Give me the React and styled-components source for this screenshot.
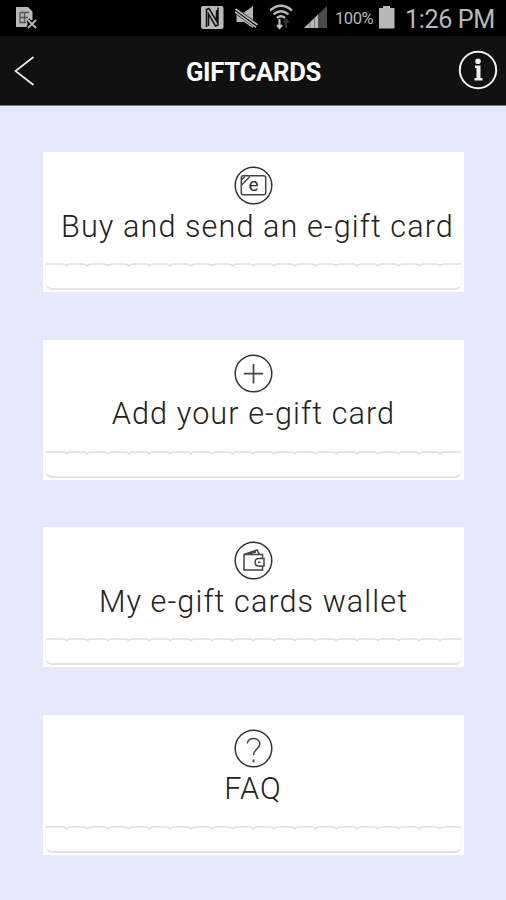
import React from 'react';
import styled, {createGlobalStyle} from 'styled-components';

const GlobalStyle = createGlobalStyle`
  * {
    box-sizing: border-box;
  }

  body {
    margin: 0;
    background-color: #e6e9fe;
    font-family: Roboto, "Liberation Sans", sans-serif;
  }
`

const Screen = styled.div`
  width: 506px;
  height: 900px;
  overflow: hidden;
  display: flex;
  flex-direction: column;
  background-color: #e6e9fe;
`

const StatusBar = styled.div`
  height: 36px;
  flex-shrink: 0;
  padding: 0 12px 0 15px;
  display: flex;
  background-color: #000;
  color: #b8b8b8;

  svg {
    flex-shrink: 0;
    display: block;
  }
`

const StatusIcons = styled.div`
  margin-left: auto;
  display: flex;
`

const Battery = styled.span`
  width: 51px;
  padding-left: 7px;
  font-size: 16.5px;
  line-height: 37px;
  letter-spacing: -0.4px;
  white-space: nowrap;
`

const Clock = styled.span`
  width: 95px;
  padding-left: 6px;
  font-size: 25.2px;
  line-height: 39px;
  letter-spacing: -0.4px;
  white-space: nowrap;
`

const Header = styled.header`
  height: 70px;
  flex-shrink: 0;
  padding: 0 7px 0 13px;
  display: grid;
  grid-template-columns: 41px 1fr 41px;
  align-items: center;
  background-color: #111;
  border-bottom: 1px solid #77777c;
  color: #fff;
`

const Title = styled.h1`
  margin: 0;
  padding: 2px 5px 0 0;
  text-align: center;
  font-size: 25.6px;
  font-weight: 700;
  line-height: 30px;
  letter-spacing: -0.25px;
`

const IconButton = styled.button`
  height: 41px;
  padding: 0;
  border: 0;
  background: none;
  color: inherit;

  svg {
    display: block;
  }
`

const CardList = styled.main`
  padding: 46px 42px 0 43px;
  display: flex;
  flex-direction: column;
  gap: 47.6px;
`

const Card = styled.a`
  height: 140px;
  padding: 14px 2px 2px;
  display: flex;
  flex-direction: column;
  align-items: center;
  background-color: #fff;
  color: #222;
`

const Label = styled.span`
  margin-top: 2.7px;
  height: 36px;
  font-size: 30.6px;
  font-weight: 300;
  line-height: 36px;
  letter-spacing: 1.08px;
  margin-right: ${props => props.$shift}px;
  white-space: nowrap;
`

const Stub = styled.div`
  width: 100%;
  height: 28px;
  margin-top: auto;
  border: 1px solid #f6f6f6;
  border-top: 0;
  border-bottom: 2px solid #e2e2e2;
  border-radius: 0 0 7px 7px;

  svg {
    display: block;
  }
`

const SimIcon = () => (
    <svg width="24" height="36" viewBox="0 0 24 36">
        <path d="M1 7h12l4.500 4.500V20l-5 1v6H1z" fill="#b8b8b8"/>
        <path d="M5 12.500h9M5 12.500v10h6M9.500 12.500v10M5 17.500h8" fill="none" stroke="#555" strokeWidth="1.300"/>
        <path d="M13 20l8 8M21 20l-8 8" stroke="#000" strokeWidth="4"/>
        <path d="M13 20l8 8M21 20l-8 8" stroke="#b8b8b8" strokeWidth="1.800"/>
    </svg>
)

const NfcIcon = () => (
    <svg width="34" height="36" viewBox="0 0 34 36">
        <rect x="0" y="6" width="22.500" height="23" rx="2" fill="#b8b8b8"/>
        <path d="M5.500 27V9.500L8 8.500l7.500 12.500V10M17 7.500v17.500l-2.500 1L7.500 14v12" fill="none" stroke="#111" strokeWidth="1.500"/>
    </svg>
)

const MuteIcon = () => (
    <svg width="35" height="36" viewBox="0 0 35 36">
        <path d="M1.500 12.500h7.500l9-6.500v22l-9-6h-7.500z" fill="#b4b4b4"/>
        <path d="M-0.500 10l22.500 16" stroke="#000" strokeWidth="5.500"/>
        <path d="M0.500 9l22 15.800M0 12l21 15.200" stroke="#b8b8b8" strokeWidth="1.700"/>
    </svg>
)

const WifiIcon = () => (
    <svg width="34" height="36" viewBox="0 0 34 36">
        <g fill="none" stroke="#b8b8b8" strokeWidth="2.400">
            <path d="M0 10.500Q11 1 22 10.500"/>
            <path d="M3.500 14.300Q11 8 18.500 14.300"/>
            <path d="M7 18Q11 14.500 15 18"/>
        </g>
        <path d="M9.500 19v9M7 25l2.500 3 2.500-3" fill="none" stroke="#c4c4c4" strokeWidth="2"/>
        <path d="M16 28v-8M13.500 22.500l2.500-3 2.500 3" fill="none" stroke="#333" strokeWidth="2"/>
    </svg>
)

const SignalIcon = () => (
    <svg width="24" height="36" viewBox="0 0 24 36">
        <path d="M0 28L23 6v22z" fill="#4a4a4a"/>
        <path d="M0 28L14 14.500V28z" fill="#b8b8b8"/>
        <path d="M6 22.300V28M10.500 18V28" stroke="#777"/>
    </svg>
)

const BatteryIcon = () => (
    <svg width="20" height="36" viewBox="0 0 20 36">
        <path d="M4 6h7v2h4.500v20.500H0V8h4z" fill="#b8b8b8"/>
    </svg>
)

const BackIcon = () => (
    <svg width="41" height="41" viewBox="0 0 41 41" fill="none" stroke="#eee" strokeWidth="1.700">
        <path d="M20.500 7L2.500 21l18 14"/>
    </svg>
)

const InfoIcon = () => (
    <svg width="41" height="41" viewBox="0 0 41 41">
        <circle cx="20" cy="20" r="18.200" fill="none" stroke="#f2f2f2" strokeWidth="2"/>
        <circle cx="20" cy="11.200" r="2.800" fill="#eee"/>
        <path d="M17 15.500h5.500v12.500h2v2.500h-8v-2.500h2V18H17z" fill="#eee"/>
    </svg>
)

const GiftLetter = styled.text`
  font-size: 19px;
  font-weight: 400;
  fill: #333;
  stroke: none;
  text-anchor: middle;
`

const glyphs = {
    gift: (
        <>
            <rect x="7.300" y="9.800" width="24.400" height="18.900" rx="2"/>
            <path d="M7.500 19L16 10.500M7.500 14l3.500-3.500"/>
            <GiftLetter x="19.500" y="24.800">e</GiftLetter>
        </>
    ),
    add: <path d="M19.500 10v19.500M9.800 19.700h19.400" strokeWidth="1.700"/>,
    wallet: (
        <>
            <path d="M28.500 17.500v-4H10v15.500h18.500v-4M10 13.500L23 9l2.500 4.300M13.500 12.700l8.500-1.700"/>
            <path d="M30 17.500h-5.500c-4.500 0-4.500 7.500 0 7.500H30zM24 21.200h2.500"/>
        </>
    ),
    faq: (
        <>
            <path d="M13.300 14.500c0.300-7 12.700-6.600 12.500 0.800-0.100 4-6.300 5.200-6.300 10.700"/>
            <path d="M19.500 30.500v2.800" strokeWidth="2"/>
        </>
    )
}

const CardIcon = ({name}) => (
    <svg width="40" height="40" viewBox="0 0 40 40" fill="none" stroke="#444" strokeWidth="1.500">
        <circle cx="19.500" cy="19.500" r="18.300" stroke="#333"/>
        {glyphs[name]}
    </svg>
)

// perforated edge: a small notch every 20.75px
const notches = Array.from({length: 19}, (_, i) => `H${16.5 + i * 20.75}q2.500 0 4 1.700q1.500-1.700 4-1.700`)
const tearLine = `M0 2${notches.join('')}H415`

const TearLine = () => (
    <svg width="415" height="6" viewBox="0 0 415 6">
        <path d={tearLine} fill="none" stroke="#dedede" strokeWidth="1.700"/>
    </svg>
)

const items = [
    {icon: 'gift', label: 'Buy and send an e-gift card', shift: -8},
    {icon: 'add', label: 'Add your e-gift card', shift: 0},
    {icon: 'wallet', label: 'My e-gift cards wallet', shift: 0},
    {icon: 'faq', label: 'FAQ', shift: 1}
]

const App = () => {
    return (
        <Screen>
            <GlobalStyle/>
            <StatusBar>
                <SimIcon/>
                <StatusIcons>
                    <NfcIcon/>
                    <MuteIcon/>
                    <WifiIcon/>
                    <SignalIcon/>
                    <Battery>100%</Battery>
                    <BatteryIcon/>
                    <Clock>1:26 PM</Clock>
                </StatusIcons>
            </StatusBar>
            <Header>
                <IconButton aria-label="Back"><BackIcon/></IconButton>
                <Title>GIFTCARDS</Title>
                <IconButton aria-label="Info"><InfoIcon/></IconButton>
            </Header>
            <CardList>
                {items.map(item => (
                    <Card key={item.icon}>
                        <CardIcon name={item.icon}/>
                        <Label $shift={item.shift}>{item.label}</Label>
                        <Stub><TearLine/></Stub>
                    </Card>
                ))}
            </CardList>
        </Screen>
    );
}

export default App;
